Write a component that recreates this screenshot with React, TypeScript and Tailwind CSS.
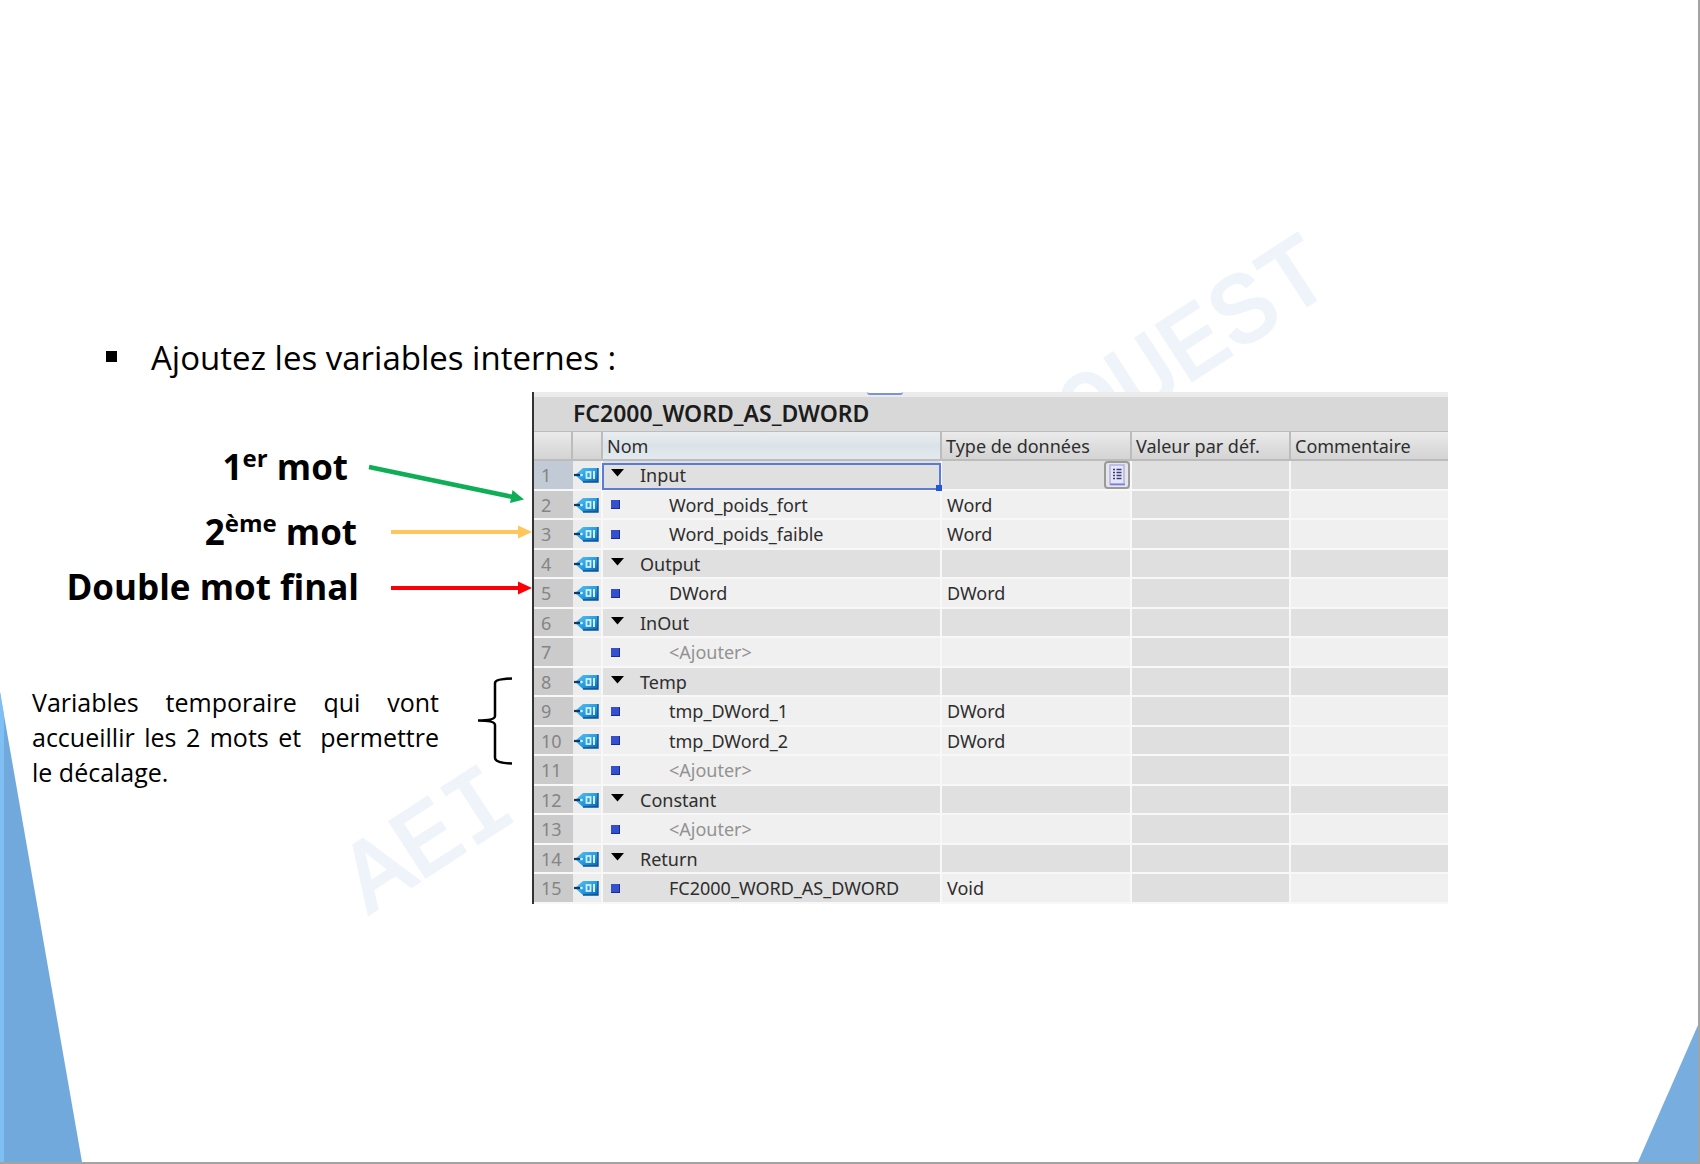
type Kind = "section" | "variable" | "add";

type Row = {
  name: string;
  kind: Kind;
  type?: string;
};

const rows: Row[] = [
  { name: "Input", kind: "section" },
  { name: "Word_poids_fort", kind: "variable", type: "Word" },
  { name: "Word_poids_faible", kind: "variable", type: "Word" },
  { name: "Output", kind: "section" },
  { name: "DWord", kind: "variable", type: "DWord" },
  { name: "InOut", kind: "section" },
  { name: "<Ajouter>", kind: "add" },
  { name: "Temp", kind: "section" },
  { name: "tmp_DWord_1", kind: "variable", type: "DWord" },
  { name: "tmp_DWord_2", kind: "variable", type: "DWord" },
  { name: "<Ajouter>", kind: "add" },
  { name: "Constant", kind: "section" },
  { name: "<Ajouter>", kind: "add" },
  { name: "Return", kind: "section" },
  { name: "FC2000_WORD_AS_DWORD", kind: "variable", type: "Void" },
];

const TagIcon = () => (
  <svg width="26" height="16" viewBox="0 0 26 16" className="block">
    <defs>
      <linearGradient id="tag" x1="0" y1="0" x2="1" y2="1">
        <stop offset="0" stopColor="#5cc4f4" />
        <stop offset="0.6" stopColor="#1f97de" />
        <stop offset="1" stopColor="#0b62ae" />
      </linearGradient>
    </defs>
    <path d="M2 8 10 1h15v14H10Z" fill="url(#tag)" />
    <path d="M25 1v14H10" fill="none" stroke="#0a5499" strokeWidth="1.4" />
    <path d="M1 8h6" stroke="#10395e" strokeWidth="2.2" />
    <circle cx="8.5" cy="8" r="1.3" fill="#d9f1fd" />
    <rect x="13.5" y="5" width="4" height="6" fill="none" stroke="#d3effd" strokeWidth="1.8" />
    <path d="M21 4v8" stroke="#d3effd" strokeWidth="2" />
  </svg>
);

const ListIcon = () => (
  <svg width="20" height="22" viewBox="0 0 20 22">
    <rect x="3" y="1" width="14" height="19" fill="#e6e6fb" stroke="#b4b4e6" strokeWidth="1.6" />
    <path d="M3 20.5h15" stroke="#7a7ae0" strokeWidth="1.6" />
    <path
      d="M6 5.5h2M6 8.5h2M6 11.5h2M6 14.5h2M9.5 5.5h5M9.5 8.5h5M9.5 11.5h5M9.5 14.5h5"
      stroke="#3a3a74"
      strokeWidth="1.6"
    />
  </svg>
);

const FlatArrow = ({ color }: { color: string }) => (
  <svg width="141" height="40" viewBox="0 0 141 40" className="shrink-0">
    <path d="M0 21h130" stroke={color} strokeWidth="4" />
    <path d="M127 14.5 141 21l-14 6.5Z" fill={color} />
  </svg>
);

const Watermark = () => (
  <svg
    width="1700"
    height="1164"
    className="absolute left-0 top-0 font-['Liberation_Mono',monospace] text-[100px]"
    fill="#eff4fa"
    stroke="#eff4fa"
    strokeWidth="3"
  >
    <text transform="translate(369 914) rotate(-33)">AEI</text>
    <text transform="translate(1085 450) rotate(-33)">OUEST</text>
  </svg>
);

const NameCell = ({ row }: { row: Row }) => {
  if (row.kind === "section") {
    return (
      <button className="flex w-full items-center pl-2 text-left">
        <svg width="13" height="8" viewBox="0 0 13 8" className="mb-1 mr-4">
          <path d="M0 0h13L6.500 7.500Z" fill="#000" />
        </svg>
        {row.name}
      </button>
    );
  }
  return (
    <div className="flex items-center pl-2">
      <span className="mr-[49px] size-[9px] border-b border-r border-[#1c2a8c] bg-[#3450cf]" />
      <span className={row.kind === "add" ? "text-[#929292]" : ""}>{row.name}</span>
    </div>
  );
};

const VariableTable = () => (
  <div className="relative min-w-0 flex-1 border-l-2 border-[#333] bg-[#d8d8d8] font-['Noto_Sans','Open_Sans',sans-serif]">
    <div className="flex h-[5px] justify-center bg-[#ebebeb]">
      <div className="mr-[212px] h-[3px] w-9 rounded-b border-b-2 border-[#7b93dc] bg-white" />
    </div>
    <h2 className="h-[34px] pl-[39px] text-[23px] font-semibold leading-[32px] text-[#1c1c1c]">
      FC2000_WORD_AS_DWORD
    </h2>
    <table className="w-full table-fixed border-separate border-spacing-0 text-[18px] leading-[24px] text-[#2e2e2e]">
      <colgroup>
        <col className="w-[39px]" />
        <col className="w-[30px]" />
        <col className="w-[339px]" />
        <col className="w-[190px]" />
        <col className="w-[159px]" />
        <col />
      </colgroup>
      <thead>
        <tr className="h-[30px] text-left [&>th]:border-b-2 [&>th]:border-r-2 [&>th]:border-t [&>th]:border-[#bcbcbc] [&>th]:bg-linear-to-b [&>th]:from-[#ebebeb] [&>th]:via-[#dedede] [&>th]:to-[#d4d4d4] [&>th]:p-0 [&>th]:pl-1 [&>th]:font-normal">
          <th />
          <th />
          <th className="from-[#e9edf0]! via-[#dce3e8]! to-[#e2eaf0]!">Nom</th>
          <th>Type de données</th>
          <th>Valeur par déf.</th>
          <th className="border-r-0!">Commentaire</th>
        </tr>
      </thead>
      <tbody>
        {rows.map((row, i) => {
          const section = row.kind === "section";
          const shade = section ? "bg-[#e0e0e0]" : "bg-[#f0f0f0]";
          const last = i === rows.length - 1;
          return (
            <tr
              key={i}
              className="odd:h-[30px] even:h-[29px] [&>td]:border-b-2 [&>td]:border-[#f8f8f8] [&>td]:p-0"
            >
              <td className={i === 0 ? "bg-[#c2cad6]" : "bg-[#cbcbcb]"}>
                <span className="pl-[7px] text-[#858585]">{i + 1}</span>
              </td>
              <td className="border-r-2 bg-[#ededed]">{row.kind !== "add" && <TagIcon />}</td>
              <td
                className={`relative border-r-2 ${last ? "bg-[#e0e0e0]" : shade}`}
              >
                <NameCell row={row} />
                {i === 0 && (
                  <div className="pointer-events-none absolute -inset-x-px -bottom-px top-0.5 border-2 border-[#5b7bd5]">
                    <span className="absolute -bottom-1 -right-1 size-[7px] bg-[#2456d8]" />
                  </div>
                )}
              </td>
              <td className={`relative border-r-2 pl-[5px]! ${shade}`}>
                {row.type}
                {i === 0 && (
                  <button
                    aria-label="Type de données"
                    className="absolute right-0 top-0 flex h-7 w-[26px] items-center justify-center rounded-sm border-2 border-[#9a9a9a] bg-[#e6e6e6]"
                  >
                    <ListIcon />
                  </button>
                )}
              </td>
              <td className="border-r-2 bg-[#dfdfdf]" />
              <td className={shade} />
            </tr>
          );
        })}
      </tbody>
    </table>
  </div>
);

const Labels = () => (
  <div className="w-[532px] shrink-0 pt-[54px] font-['Open_Sans','Noto_Sans',sans-serif] text-black">
    <div className="flex h-[60px] items-start justify-end gap-5 pr-2 text-[35px] font-bold leading-10">
      <p>
        1<sup className="top-0 align-[13px] text-[24px] leading-none">er</sup> mot
      </p>
      <svg width="156" height="46" viewBox="0 0 156 46" className="mt-[14px] shrink-0">
        <path d="M1 7 145 37" stroke="#0fae56" strokeWidth="4.500" />
        <path d="M144.500 30 156 39.500 142 43Z" fill="#0fae56" />
      </svg>
    </div>
    <div className="mt-[5px] flex h-10 items-start justify-end gap-[34px] text-[35px] font-bold leading-10">
      <p>
        2<sup className="top-0 align-[13px] text-[24px] leading-none">ème</sup> mot
      </p>
      <FlatArrow color="#ffc65c" />
    </div>
    <div className="mt-4 flex h-10 items-start justify-end gap-8 text-[35px] font-bold leading-10">
      <p>Double mot final</p>
      <FlatArrow color="#fb0007" />
    </div>
    <div className="mt-[70px] flex items-start justify-between pl-8 pr-[19px]">
      <p className="w-[407px] pt-2 text-justify text-[25px] leading-[35px]">
        Variables temporaire qui vont accueillir les 2 mots et&nbsp; permettre le&nbsp;décalage.
      </p>
      <svg width="36" height="88" viewBox="0 0 36 88" fill="none" stroke="#000" strokeWidth="2.500">
        <path d="M35 1.500Q18 2 18 6V39Q18 43.500 1 43.500Q18 43.500 18 48V81Q18 86 35 86.500" />
      </svg>
    </div>
  </div>
);

export default function App() {
  return (
    <main className="relative min-h-screen overflow-hidden border-b-2 border-r-2 border-[#a3a3a3] bg-white">
      <svg width="83" height="470" viewBox="0 0 83 470" className="absolute bottom-0 left-0">
        <path d="M0 0 82 470H0Z" fill="#72a9dc" />
        <path d="M0 0 4 23V470H0Z" fill="#80bff3" />
      </svg>
      <svg width="60" height="137" viewBox="0 0 60 137" className="absolute bottom-0 right-0">
        <path d="M60 0V137H0Z" fill="#78addf" />
      </svg>
      <Watermark />
      <div className="relative pt-[338px]">
        <h1 className="flex h-[54px] items-start pl-[106px] font-['Open_Sans','Noto_Sans',sans-serif] text-[33px] leading-10 text-black">
          <span className="mr-[34px] mt-[13px] size-[11px] bg-black" />
          Ajoutez les variables internes :
        </h1>
        <div className="flex items-start pr-[250px]">
          <Labels />
          <VariableTable />
        </div>
      </div>
    </main>
  );
}
